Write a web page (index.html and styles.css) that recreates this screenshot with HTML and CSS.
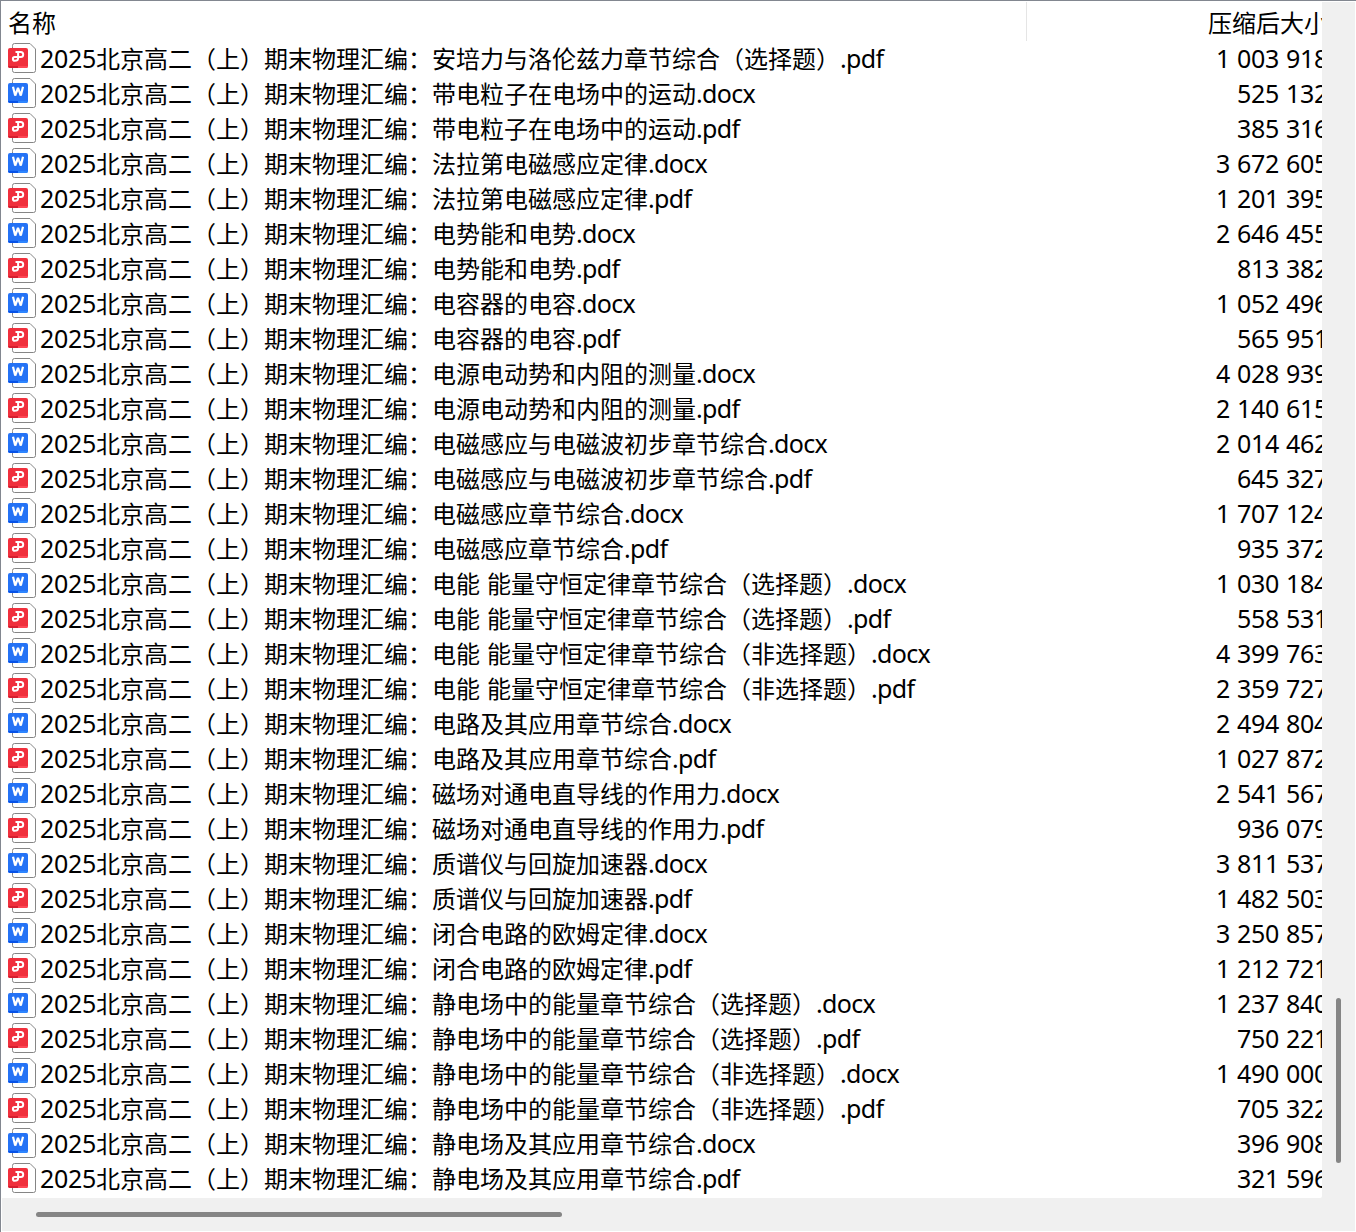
FILE: index.html
```
<!DOCTYPE html>
<html lang="zh-CN">
<head>
<meta charset="utf-8">
<title>名称</title>
<link rel="stylesheet" href="styles.css">
</head>
<body>
<svg class="defs" aria-hidden="true">
  <symbol id="sheet" viewBox="0 0 28 30">
    <path d="M4.500 3.500v-1q0-2 2-2h15.500l5.500 5.500v21.500q0 2-2 2h-19q-2 0-2-2z" fill="#fff" stroke="#858585"/>
  </symbol>
  <symbol id="pdf" viewBox="0 0 28 30">
    <use href="#sheet"/>
    <rect y="5" width="20" height="20" rx="2" fill="#f0303d"/>
    <path d="M0 23h10v2H2q-2 0-2-2z" fill="#d61f30"/>
    <path d="M10 23h10q0 2-2 2h-8z" fill="#ff4654"/>
    <path d="M7.500 9.100h5.200a2.500 2.500 0 0 1 0 5H6.700a1.800 1.800 0 1 0 0 3.600q3.400 0 3.400-2.500V9.100" fill="none" stroke="#fff" stroke-width="2"/>
  </symbol>
  <symbol id="doc" viewBox="0 0 28 30">
    <use href="#sheet"/>
    <rect y="5" width="20" height="20" rx="2" fill="#2472f5"/>
    <path d="M0 23h10v2H2q-2 0-2-2z" fill="#0752e8"/>
    <path d="M10 23h10q0 2-2 2h-8z" fill="#2e86ff"/>
    <path d="M5 8.800l2.200 8.700L10 10l2.800 7.500L15 8.800" fill="none" stroke="#fff" stroke-width="2.200" stroke-linejoin="bevel"/>
  </symbol>
</svg>
<div class="window">
  <main class="list">
    <header class="head"><span class="head-name">名称</span><span class="head-size">压缩后大小</span></header>
    <div class="row"><svg class="icon"><use href="#pdf"/></svg><span class="name"><span class="num">2025</span>北京高二（上）期末物理汇编：安培力与洛伦兹力章节综合（选择题）<span class="ext">.pdf</span></span><span class="size">1 003 918</span></div>
    <div class="row"><svg class="icon"><use href="#doc"/></svg><span class="name"><span class="num">2025</span>北京高二（上）期末物理汇编：带电粒子在电场中的运动<span class="ext">.docx</span></span><span class="size">525 132</span></div>
    <div class="row"><svg class="icon"><use href="#pdf"/></svg><span class="name"><span class="num">2025</span>北京高二（上）期末物理汇编：带电粒子在电场中的运动<span class="ext">.pdf</span></span><span class="size">385 316</span></div>
    <div class="row"><svg class="icon"><use href="#doc"/></svg><span class="name"><span class="num">2025</span>北京高二（上）期末物理汇编：法拉第电磁感应定律<span class="ext">.docx</span></span><span class="size">3 672 605</span></div>
    <div class="row"><svg class="icon"><use href="#pdf"/></svg><span class="name"><span class="num">2025</span>北京高二（上）期末物理汇编：法拉第电磁感应定律<span class="ext">.pdf</span></span><span class="size">1 201 395</span></div>
    <div class="row"><svg class="icon"><use href="#doc"/></svg><span class="name"><span class="num">2025</span>北京高二（上）期末物理汇编：电势能和电势<span class="ext">.docx</span></span><span class="size">2 646 455</span></div>
    <div class="row"><svg class="icon"><use href="#pdf"/></svg><span class="name"><span class="num">2025</span>北京高二（上）期末物理汇编：电势能和电势<span class="ext">.pdf</span></span><span class="size">813 382</span></div>
    <div class="row"><svg class="icon"><use href="#doc"/></svg><span class="name"><span class="num">2025</span>北京高二（上）期末物理汇编：电容器的电容<span class="ext">.docx</span></span><span class="size">1 052 496</span></div>
    <div class="row"><svg class="icon"><use href="#pdf"/></svg><span class="name"><span class="num">2025</span>北京高二（上）期末物理汇编：电容器的电容<span class="ext">.pdf</span></span><span class="size">565 951</span></div>
    <div class="row"><svg class="icon"><use href="#doc"/></svg><span class="name"><span class="num">2025</span>北京高二（上）期末物理汇编：电源电动势和内阻的测量<span class="ext">.docx</span></span><span class="size">4 028 939</span></div>
    <div class="row"><svg class="icon"><use href="#pdf"/></svg><span class="name"><span class="num">2025</span>北京高二（上）期末物理汇编：电源电动势和内阻的测量<span class="ext">.pdf</span></span><span class="size">2 140 615</span></div>
    <div class="row"><svg class="icon"><use href="#doc"/></svg><span class="name"><span class="num">2025</span>北京高二（上）期末物理汇编：电磁感应与电磁波初步章节综合<span class="ext">.docx</span></span><span class="size">2 014 462</span></div>
    <div class="row"><svg class="icon"><use href="#pdf"/></svg><span class="name"><span class="num">2025</span>北京高二（上）期末物理汇编：电磁感应与电磁波初步章节综合<span class="ext">.pdf</span></span><span class="size">645 327</span></div>
    <div class="row"><svg class="icon"><use href="#doc"/></svg><span class="name"><span class="num">2025</span>北京高二（上）期末物理汇编：电磁感应章节综合<span class="ext">.docx</span></span><span class="size">1 707 124</span></div>
    <div class="row"><svg class="icon"><use href="#pdf"/></svg><span class="name"><span class="num">2025</span>北京高二（上）期末物理汇编：电磁感应章节综合<span class="ext">.pdf</span></span><span class="size">935 372</span></div>
    <div class="row"><svg class="icon"><use href="#doc"/></svg><span class="name"><span class="num">2025</span>北京高二（上）期末物理汇编：电能 能量守恒定律章节综合（选择题）<span class="ext">.docx</span></span><span class="size">1 030 184</span></div>
    <div class="row"><svg class="icon"><use href="#pdf"/></svg><span class="name"><span class="num">2025</span>北京高二（上）期末物理汇编：电能 能量守恒定律章节综合（选择题）<span class="ext">.pdf</span></span><span class="size">558 531</span></div>
    <div class="row"><svg class="icon"><use href="#doc"/></svg><span class="name"><span class="num">2025</span>北京高二（上）期末物理汇编：电能 能量守恒定律章节综合（非选择题）<span class="ext">.docx</span></span><span class="size">4 399 763</span></div>
    <div class="row"><svg class="icon"><use href="#pdf"/></svg><span class="name"><span class="num">2025</span>北京高二（上）期末物理汇编：电能 能量守恒定律章节综合（非选择题）<span class="ext">.pdf</span></span><span class="size">2 359 727</span></div>
    <div class="row"><svg class="icon"><use href="#doc"/></svg><span class="name"><span class="num">2025</span>北京高二（上）期末物理汇编：电路及其应用章节综合<span class="ext">.docx</span></span><span class="size">2 494 804</span></div>
    <div class="row"><svg class="icon"><use href="#pdf"/></svg><span class="name"><span class="num">2025</span>北京高二（上）期末物理汇编：电路及其应用章节综合<span class="ext">.pdf</span></span><span class="size">1 027 872</span></div>
    <div class="row"><svg class="icon"><use href="#doc"/></svg><span class="name"><span class="num">2025</span>北京高二（上）期末物理汇编：磁场对通电直导线的作用力<span class="ext">.docx</span></span><span class="size">2 541 567</span></div>
    <div class="row"><svg class="icon"><use href="#pdf"/></svg><span class="name"><span class="num">2025</span>北京高二（上）期末物理汇编：磁场对通电直导线的作用力<span class="ext">.pdf</span></span><span class="size">936 079</span></div>
    <div class="row"><svg class="icon"><use href="#doc"/></svg><span class="name"><span class="num">2025</span>北京高二（上）期末物理汇编：质谱仪与回旋加速器<span class="ext">.docx</span></span><span class="size">3 811 537</span></div>
    <div class="row"><svg class="icon"><use href="#pdf"/></svg><span class="name"><span class="num">2025</span>北京高二（上）期末物理汇编：质谱仪与回旋加速器<span class="ext">.pdf</span></span><span class="size">1 482 503</span></div>
    <div class="row"><svg class="icon"><use href="#doc"/></svg><span class="name"><span class="num">2025</span>北京高二（上）期末物理汇编：闭合电路的欧姆定律<span class="ext">.docx</span></span><span class="size">3 250 857</span></div>
    <div class="row"><svg class="icon"><use href="#pdf"/></svg><span class="name"><span class="num">2025</span>北京高二（上）期末物理汇编：闭合电路的欧姆定律<span class="ext">.pdf</span></span><span class="size">1 212 721</span></div>
    <div class="row"><svg class="icon"><use href="#doc"/></svg><span class="name"><span class="num">2025</span>北京高二（上）期末物理汇编：静电场中的能量章节综合（选择题）<span class="ext">.docx</span></span><span class="size">1 237 840</span></div>
    <div class="row"><svg class="icon"><use href="#pdf"/></svg><span class="name"><span class="num">2025</span>北京高二（上）期末物理汇编：静电场中的能量章节综合（选择题）<span class="ext">.pdf</span></span><span class="size">750 221</span></div>
    <div class="row"><svg class="icon"><use href="#doc"/></svg><span class="name"><span class="num">2025</span>北京高二（上）期末物理汇编：静电场中的能量章节综合（非选择题）<span class="ext">.docx</span></span><span class="size">1 490 000</span></div>
    <div class="row"><svg class="icon"><use href="#pdf"/></svg><span class="name"><span class="num">2025</span>北京高二（上）期末物理汇编：静电场中的能量章节综合（非选择题）<span class="ext">.pdf</span></span><span class="size">705 322</span></div>
    <div class="row"><svg class="icon"><use href="#doc"/></svg><span class="name"><span class="num">2025</span>北京高二（上）期末物理汇编：静电场及其应用章节综合<span class="ext">.docx</span></span><span class="size">396 908</span></div>
    <div class="row"><svg class="icon"><use href="#pdf"/></svg><span class="name"><span class="num">2025</span>北京高二（上）期末物理汇编：静电场及其应用章节综合<span class="ext">.pdf</span></span><span class="size">321 596</span></div>
  </main>
  <div class="vbar"><div class="vthumb"></div></div>
  <div class="hbar"><div class="hthumb"></div></div>
</div>
</body>
</html>
```
FILE: styles.css
```
* { box-sizing: border-box; }
body {
  margin: 0;
  background: #fff;
  color: #000;
  font: 24px/33px "Noto Sans CJK SC", sans-serif;
}
.defs { display: none; }
.window {
  display: grid;
  grid-template-columns: 1fr 34px;
  grid-template-rows: 1197px 1fr;
  width: 1356px;
  height: 1232px;
  border-top: 1px solid #828790;
  border-left: 1px solid #828790;
  background: #f0f0f0;
  overflow: hidden;
}
.list {
  min-width: 0;
  overflow: hidden;
  background: #fff;
  border-bottom-right-radius: 2px;
}
.head {
  display: flex;
  height: 40px;
  padding-left: 7px;
  line-height: 40px;
  white-space: nowrap;
}
.head-name {
  flex: none;
  width: 1019px;
  margin-top: 1px;
  border-right: 1px solid #e5e5e5;
}
.head-size {
  flex: none;
  margin: 1px 0 0 181px;
}
.row {
  display: flex;
  height: 35px;
  padding-left: 7px;
  white-space: nowrap;
}
.icon {
  flex: none;
  width: 28px;
  height: 30px;
  margin: 2px 4px 0 0;
}
.name {
  flex: none;
  width: 1128px;
  word-spacing: 1.600px;
}
.num, .ext, .size {
  font-family: "Noto Sans", sans-serif;
  font-size: 25px;
  line-height: 1;
}
.num { letter-spacing: -0.300px; }
.ext { letter-spacing: -0.650px; }
.size {
  flex: none;
  width: 160px;
  line-height: 34px;
  text-align: right;
  letter-spacing: -0.300px;
  word-spacing: 0.800px;
}
.vbar {
  padding: 996px 0 0 14px;
  border-top: 1px solid #fff;
  border-right: 1px solid #fff;
}
.vthumb {
  width: 5px;
  height: 165px;
  border-radius: 2.500px;
  background: #858585;
}
.hbar {
  grid-column: 1 / -1;
  padding: 14px 0 0 34px;
  border: solid #fff;
  border-width: 0 1px 1px;
}
.hthumb {
  width: 526px;
  height: 5px;
  border-radius: 2.500px;
  background: #858585;
}
```
